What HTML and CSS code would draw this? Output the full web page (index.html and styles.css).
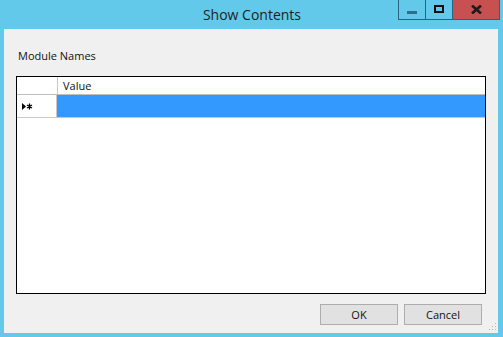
FILE: index.html
```html
<!DOCTYPE html>
<html lang="en">
  <head>
    <meta charset="UTF-8" />
    <title>Show Contents</title>
    <link rel="stylesheet" href="styles.css">
  </head>
  <body>
    <div class="window">
      <!-- title bar -->
      <div class="titlebar">
        <span></span>
        <div class="title">Show Contents</div>
        <div class="controls">
          <div class="ctl ctl-min"><span class="min-glyph"></span></div>
          <div class="ctl ctl-max"><span class="max-glyph"></span></div>
          <div class="ctl ctl-close">
            <svg width="11" height="9" viewBox="0 0 11 9">
              <path d="M1 0.5 L10 8.5 M10 0.5 L1 8.5" stroke="#1b1b1b" stroke-width="2.6" />
            </svg>
          </div>
        </div>
      </div>

      <!-- client area -->
      <div class="client">
        <div class="label">Module Names</div>

        <div class="grid">
          <div class="grid-head">
            <div class="corner"></div>
            <div class="col-head">Value</div>
          </div>
          <div class="grid-row">
            <div class="row-head">
              <svg width="11" height="7" viewBox="0 0 11 7">
                <path d="M0 0 L4 3.5 L0 7 Z" fill="#000" />
                <path d="M7.5 0.5 V6.5 M5 2 L10 5 M10 2 L5 5" stroke="#000" stroke-width="1.3" />
              </svg>
            </div>
            <div class="cell-selected"></div>
          </div>
        </div>

        <div class="buttons">
          <button class="btn">OK</button>
          <button class="btn">Cancel</button>
        </div>
        <div class="grip">
          <svg width="8" height="8" viewBox="0 0 8 8">
            <rect x="6" y="0" width="1" height="1" fill="#b8b8b8" />
            <rect x="3" y="3" width="1" height="1" fill="#b8b8b8" />
            <rect x="6" y="3" width="1" height="1" fill="#b8b8b8" />
            <rect x="0" y="6" width="1" height="1" fill="#b8b8b8" />
            <rect x="3" y="6" width="1" height="1" fill="#b8b8b8" />
            <rect x="6" y="6" width="1" height="1" fill="#b8b8b8" />
          </svg>
        </div>
      </div>
    </div>
  </body>
</html>
```

FILE: styles.css
```css
body {
  margin: 0;
  font-family: "Open Sans", "Liberation Sans", sans-serif;
}

.window {
  width: 503px;
  height: 337px;
  background-color: #63c9ea;
  display: flex;
  flex-direction: column;
  box-sizing: border-box;
  padding: 0 5px 4px 4px;
}

.titlebar {
  height: 29px;
  display: grid;
  grid-template-columns: 1fr auto 1fr;
  margin-right: -2px;
}

.title {
  font-size: 14px;
  color: #1e1e1e;
  line-height: 29px;
}

.controls {
  display: flex;
  justify-content: flex-end;
  align-items: flex-start;
}

.ctl {
  height: 20px;
  box-sizing: border-box;
  border: 1px solid #2a6480;
  border-top: none;
  display: flex;
  align-items: center;
  justify-content: center;
}

.ctl-min {
  width: 28px;
}

.ctl-max {
  width: 27px;
  border-left: none;
}

.ctl-close {
  width: 47px;
  background-color: #c75050;
  border-left: none;
  border-color: #8a3b3b;
}

.min-glyph {
  width: 10px;
  height: 3px;
  margin-top: 5px;
  background-color: #2c6e8b;
}

.max-glyph {
  width: 6px;
  height: 4px;
  border: 2px solid #111;
  margin-top: -1px;
}

.client {
  flex: 1;
  background-color: #f0f0f0;
  display: flex;
  flex-direction: column;
  padding: 0 14px 0 12px;
  position: relative;
}

.label {
  font-size: 11px;
  color: #111;
  margin: 19px 0 0 2px;
  height: 28px;
}

.grid {
  height: 218px;
  background-color: #fff;
  border: 1px solid #000;
  box-sizing: border-box;
  width: 470px;
}

.grid-head,
.grid-row {
  display: flex;
}

.grid-head {
  height: 17px;
  border-bottom: 1px solid #bfbfbf;
}

.corner,
.row-head {
  width: 40px;
  border-right: 1px solid #c8c8c8;
  flex-shrink: 0;
}

.col-head {
  font-size: 11px;
  color: #111;
  line-height: 17px;
  padding-left: 5px;
}

.grid-row {
  height: 22px;
  border-bottom: 1px solid #c8c8c8;
}

.row-head {
  display: flex;
  align-items: center;
  padding-left: 5px;
  box-sizing: border-box;
}

.cell-selected {
  flex: 1;
  background-color: #3399ff;
}

.buttons {
  display: flex;
  justify-content: flex-end;
  gap: 6px;
  margin-top: 10px;
  padding-right: 2px;
}

.btn {
  height: 21px;
  width: 78px;
  background-color: #e1e1e1;
  border: 1px solid #adadad;
  font-family: "Open Sans", "Liberation Sans", sans-serif;
  font-size: 11px;
  color: #111;
  padding: 0;
}

.grip {
  position: absolute;
  right: 1px;
  bottom: 2px;
  line-height: 0;
}
```
